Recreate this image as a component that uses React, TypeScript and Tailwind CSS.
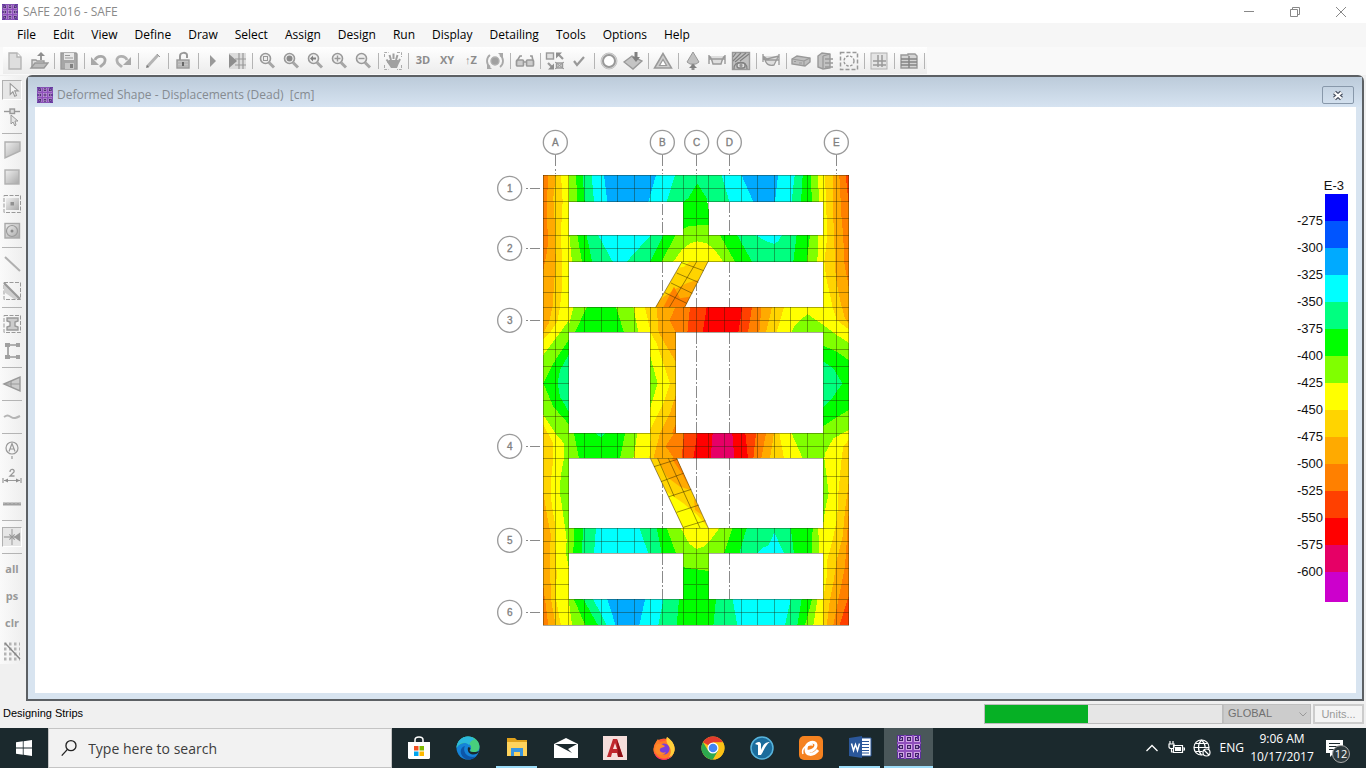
import type { ReactNode } from 'react'

/* ---------- logo ---------- */

function SafeLogo(props: { size: number }) {
  const cells = [1, 9, 17]
  return <svg width={props.size} height={props.size} viewBox="0 0 24 24" aria-hidden="true">
    <rect width="24" height="24" fill="#5c2f9a" />
    <path d="M0 8h24M0 16h24M8 0v24M16 0v24" stroke="#8f4fbc" strokeWidth="2" />
    {cells.map((y) => cells.map((x) => <g key={`${x}-${y}`}>
      <rect x={x + 0.5} y={y + 0.5} width="5" height="5" fill="#3d1f63" stroke="#cfa6e4" strokeWidth="1" />
      <rect x={x + 2.2} y={y + 2.2} width="1.6" height="1.6" fill="#e8cdf5" />
    </g>))}
    <path d="M3 4V0M21 4V0M3 20v4M21 20v4M0 12h2M22 12h2" stroke="#5c2f9a" strokeWidth="2" />
  </svg>
}

/* ---------- toolbar icons, all on a 20x20 grid ---------- */

function Icon(props: { children: ReactNode }) {
  return <svg width="20" height="20" viewBox="0 0 20 20" fill="none" stroke="#999" strokeWidth="1.4" aria-hidden="true">{props.children}</svg>
}

function Magnifier(props: { children?: ReactNode }) {
  return <Icon>
    <circle cx="8.500" cy="7.500" r="5" fill="#eee" strokeWidth="1.600" />
    <path d="M12 11.500L17 16.500" strokeWidth="3" stroke="#a6a6a6" />
    {props.children}
  </Icon>
}

const topIcons: Record<string, ReactNode> = {
  New: <Icon><path d="M4 2h8l4 4v12H4z" fill="#dedede" stroke="#b4b4b4" /><path d="M12 2v4h4" fill="#fff" stroke="#b4b4b4" /></Icon>,
  Open: <Icon><path d="M3 17V9h4l1 1h7v2" fill="#ddd" /><path d="M2 17l4-5h13l-4 5z" fill="#bbb" /><path d="M12 9V4" strokeWidth="2" /><path d="M8 5l4-4 4 4z" fill="#8e8e8e" stroke="none" /></Icon>,
  Save: <Icon><path d="M2 2h15l1 1v15H2z" fill="#a6a6a6" stroke="#9a9a9a" /><path d="M5 2h10v7H5z" fill="#e8e8e8" stroke="none" /><path d="M6 4.500h5M6 7h8" strokeWidth="1" /><path d="M6 12h9v6H6z" fill="#c8c8c8" stroke="none" /><path d="M11 13h3v4h-3z" fill="#808080" stroke="none" /></Icon>,
  Undo: <Icon><path d="M6 9C8 4 17 4 16 10c0 3-3 4-5 6" strokeWidth="2.800" stroke="#a8a8a8" /><path d="M2 6v8h8z" fill="#a8a8a8" stroke="none" /></Icon>,
  Redo: <Icon><path d="M14 9C12 4 3 4 4 10c0 3 3 4 5 6" strokeWidth="2.800" stroke="#b0b0b0" /><path d="M18 6v8h-8z" fill="#a8a8a8" stroke="none" /></Icon>,
  Edit: <Icon><path d="M4 16L15 4" strokeWidth="3" stroke="#b4b4b4" /><path d="M14 3l3 3" strokeWidth="1" /><path d="M3 17l1-3 2 2z" fill="#777" stroke="none" /></Icon>,
  Unlock: <Icon><path d="M7 9V5c0-4 7-4 7-1v3" strokeWidth="2" /><rect x="4" y="9" width="12" height="8" fill="#c4c4c4" /><path d="M4 12h12M4 15h12" stroke="#aaa" strokeWidth="1" /><path d="M10 11v4" stroke="#666" strokeWidth="2" /></Icon>,
  Run: <Icon><path d="M7 4l6 6-6 6z" fill="#999" stroke="none" /></Icon>,
  'Run detailing': <Icon><path d="M2 2h17v16H2z" fill="#dcdcdc" stroke="none" /><path d="M12 2v16M16 2v16M8 8h11M8 14h11" strokeWidth="1.200" /><path d="M2 3l8 7-8 7z" fill="#8e8e8e" stroke="none" /></Icon>,
  'Zoom window': <Magnifier><rect x="6.500" y="5.500" width="4" height="4" strokeWidth="1" /></Magnifier>,
  'Zoom full': <Magnifier><circle cx="8.500" cy="7.500" r="3" fill="#8a8a8a" stroke="none" /></Magnifier>,
  'Zoom previous': <Magnifier><path d="M5 7.500l3-3v2h3v2H8v2z" fill="#808080" stroke="none" /></Magnifier>,
  'Zoom in': <Magnifier><path d="M5.500 7.500h6M8.500 4.500v6" /></Magnifier>,
  'Zoom out': <Magnifier><path d="M5.500 7.500h6" /></Magnifier>,
  Pan: <Icon><path d="M1.500 6V1.500h4M14 1.500h4.500V6M1.500 14v4.500h4M18.500 14v4.500H14" stroke="#aaa" strokeWidth="1" strokeDasharray="3 1" /><path d="M6 12L3.500 8.500M8 9L6.500 4M10.500 8V2.500M13 9l1.500-5M15 12l2-4" strokeWidth="2" stroke="#a0a0a0" /><path d="M6 9h9l1 3-2 5H8l-4-6z" fill="#a0a0a0" stroke="none" /></Icon>,
  Rotate: <Icon><circle cx="10" cy="10" r="4" fill="#a0a0a0" stroke="#b0b0b0" /><path d="M5 4C1 7 1 13 5 16M15 4c4 3 4 9 0 12" strokeWidth="1.800" stroke="#a8a8a8" /><path d="M2 13v5h5zM18 7V2h-5z" fill="#a8a8a8" stroke="none" /></Icon>,
  'Object shrink': <Icon><rect x="1.500" y="9" width="7" height="6" rx="1" fill="#ccc" strokeWidth="1.700" /><rect x="11.500" y="9" width="7" height="6" rx="1" fill="#ccc" strokeWidth="1.700" /><path d="M8 11h4M2 10l3-5h2M18 10l-1-5h-2" strokeWidth="1.600" /></Icon>,
  'Display options': <Icon><rect x="1.500" y="2" width="7" height="6" fill="#e0e0e0" /><rect x="11.500" y="12" width="6" height="5" fill="#d0d0d0" /><path d="M10 11l9 7M10 18l9-7" strokeWidth="1" /><path d="M18 8l-5-5M3 12l4 4" strokeWidth="2.200" /><path d="M11 1.500h6l-6 6zM9 18.500H3l6-6z" fill="#8e8e8e" stroke="none" /></Icon>,
  'Check model': <Icon><path d="M5 10l3 4 7-8" strokeWidth="2.200" /></Icon>,
  'Assign joint': <Icon><circle cx="10" cy="10" r="8" strokeWidth="1" stroke="#c4c4c4" fill="#ddd" /><circle cx="10" cy="10" r="6" strokeWidth="2" fill="#fff" /></Icon>,
  'Show load': <Icon><path d="M1 11l8-6 10 5-9 8z" fill="#c4c4c4" /><path d="M13 1v6" strokeWidth="3" stroke="#808080" /><path d="M9 6h8l-4 5z" fill="#808080" stroke="none" /></Icon>,
  'Deformed shape': <Icon><path d="M10 2.500L1.500 17h17z" fill="#ccc" strokeWidth="1.500" /><path d="M10 8.500l-3.500 6h7z" fill="#fff" strokeWidth="1.200" /></Icon>,
  Reactions: <Icon><path d="M10 1L4 11l3 2h6l3-2z" fill="#c0c0c0" strokeWidth="1" /><path d="M10 13v6" strokeWidth="3" stroke="#909090" /><path d="M6 17l4-4 4 4z" fill="#808080" stroke="none" /></Icon>,
  'Beam forces': <Icon><path d="M2 4v9M18 4v9M2 8h16M2 5c2 1 3 4 4 8h8c1-4 2-7 4-8" fill="#dedede" strokeWidth="1.400" /></Icon>,
  'Slab forces': <Icon><rect x="1.500" y="1.500" width="17" height="17" fill="#c0c0c0" /><path d="M2 6l3-4M2 10l8-8M4 11l11-9M9 10l9-7M3 18c-1-9 14-9 13 0" strokeWidth="1.200" stroke="#808080" /><rect x="6" y="12" width="8" height="5" rx="2" fill="#ddd" stroke="#808080" /><circle cx="10" cy="14.500" r="1" fill="#666" /></Icon>,
  'Strip forces': <Icon><path d="M2 3v8M18 3v11M2 5l4 3 12-3M2 8l5 1h11M3 6c2 8 5 9 10 8l4-8" fill="#ddd" strokeWidth="1.300" /></Icon>,
  'Beam design': <Icon><path d="M1 8l5-3 13 2v4l-5 4L1 13z" fill="#bebebe" /><path d="M1 8l12 2 6-3M13 10v5M3 10.500h2M8 12h3" strokeWidth="1.200" /></Icon>,
  'Slab design': <Icon><path d="M3 5l4-3 8 1v14l-7 1-5-2z" fill="#c2c2c2" /><path d="M8 5v12M8 5l7-2M10 8h8M10 12h8M10 16h8" strokeWidth="1.300" /></Icon>,
  Punching: <Icon><rect x="1.500" y="1.500" width="17" height="17" strokeDasharray="4 2" strokeWidth="1.500" /><circle cx="10" cy="10" r="5" strokeDasharray="2.500 1.500" /></Icon>,
  'Detailing grid': <Icon><rect x="2" y="2" width="16" height="16" fill="#e4e4e4" stroke="#b0b0b0" strokeWidth="1" /><path d="M9 4v12M13 4v12M4 10h13M4 14h13" strokeWidth="1.500" /></Icon>,
  Tables: <Icon><path d="M2 4h7V3h7l2 2v12H2z" fill="#d4d4d4" /><path d="M2 8h16M2 11h16M2 14h16M10 5v12" strokeWidth="1.400" stroke="#848484" /></Icon>,
}

const topGroups = [
  ['New', 'Open'], ['Save'], ['Undo', 'Redo'], ['Edit'], ['Unlock'], ['Run', 'Run detailing'],
  ['Zoom window', 'Zoom full', 'Zoom previous', 'Zoom in', 'Zoom out'], ['Pan'],
  ['3D', 'XY', '↑Z', 'Rotate'], ['Object shrink'], ['Display options', 'Check model'],
  ['Assign joint', 'Show load'], ['Deformed shape'], ['Reactions', 'Beam forces', 'Slab forces'],
  ['Strip forces'], ['Beam design', 'Slab design', 'Punching'], ['Detailing grid'], ['Tables'],
]

const sideIcons: Record<string, ReactNode> = {
  Select: <Icon><path d="M8 3v12l3-3 2 5 2-1-2-5h4z" fill="#f4f4f4" stroke="#999" strokeWidth="1.200" /></Icon>,
  Reshape: <Icon><path d="M2 4.500h16" /><rect x="8" y="2" width="4.500" height="4.500" fill="#ddd" /><path d="M9 8v9l2-2 2 4 1-1-1-4h3z" fill="#e4e4e4" strokeWidth="1" /></Icon>,
  'Draw slab': <Icon><path d="M3 2h15v9L3 18z" fill="url(#metal)" stroke="#b0b0b0" /></Icon>,
  'Draw rectangle': <Icon><rect x="3" y="3" width="14" height="14" fill="url(#metal)" stroke="#b0b0b0" /></Icon>,
  'Quick slab': <Icon><rect x="2" y="1.500" width="16.500" height="17" strokeDasharray="4 1.500" strokeWidth="1" /><rect x="4" y="4" width="13" height="12" fill="url(#metal)" stroke="none" /><rect x="8.500" y="8" width="3.500" height="3.500" fill="#909090" stroke="none" /></Icon>,
  'Draw around': <Icon><rect x="3" y="2.500" width="14.500" height="14.500" fill="url(#metal)" stroke="#a8a8a8" /><circle cx="10" cy="10" r="5.500" strokeWidth="1.200" /><circle cx="10" cy="10" r="1.500" fill="#888" stroke="none" /></Icon>,
  'Draw line': <Icon><path d="M3 3l15 14" stroke="#b0b0b0" strokeWidth="2" /></Icon>,
  'Quick line': <Icon><rect x="2" y="1.500" width="16.500" height="17" strokeDasharray="4 1.500" strokeWidth="1" /><path d="M2 2v9l10 7h6z" fill="#d0d0d0" stroke="none" /><path d="M2 2l16 16" strokeWidth="2.200" /></Icon>,
  'Draw column': <Icon><rect x="2" y="1.500" width="16.500" height="17" strokeDasharray="4 1.500" strokeWidth="1" /><path d="M5 4h11v3l-3 1v4l3 1v3H5v-3l3-1V8L5 7z" fill="#ccc" /></Icon>,
  'Draw wall': <Icon><path d="M16 4H6v12h10" strokeWidth="1.600" /><path d="M3 2h5v4H3zM14 2h4v4h-4zM3 14h5v4H3zM14 14h4v4h-4z" fill="#a0a0a0" stroke="none" /></Icon>,
  'Draw strip': <Icon><path d="M2 10l16-7v14z" fill="#ccc" /><path d="M2 10h16M9 7v6" strokeWidth="1.200" /></Icon>,
  'Draw tendon': <Icon><path d="M2 10c3-2 4-2 7 0s5 1 9-1" stroke="#b4b4b4" strokeWidth="2" /></Icon>,
  'Grid bubble': <Icon><circle cx="10" cy="8" r="6" strokeWidth="1.200" /><path d="M7 11.500l3-8 3 8M8 9h4M10 16v3" strokeWidth="1.200" /></Icon>,
  Dimension: <Icon><path d="M1 11v5M19 11v5M2 13.500h16" strokeWidth="1.200" /><path d="M2 13.500l4-2v4zM18 13.500l-4-2v4z" fill="#8e8e8e" stroke="none" /><path d="M8 5c0-4 5-3 4 0L8 9h4.500" strokeWidth="1.300" /></Icon>,
  'Reference line': <Icon><path d="M1 10h18" stroke="#a0a0a0" strokeWidth="3" /><path d="M1 9h18" stroke="#c0c0c0" strokeWidth="1" strokeDasharray="2 2" /></Icon>,
  Snap: <Icon><path d="M10 1v18M1 10h18" stroke="#aaa" /><path d="M7 7l6 6M7 13l6-6" strokeWidth="1.200" /><path d="M12 10l7-5v10z" fill="#999" stroke="none" /></Icon>,
  'Clear snap': <Icon><path d="M2 3h16M2 8h16M2 13h16M2 18h16" strokeWidth="3" strokeDasharray="2.500 2.500" stroke="#b4b4b4" /><path d="M3 2l15 16" stroke="#888" /></Icon>,
}

const sideGroups = [
  ['Select', 'Reshape'], ['Draw slab', 'Draw rectangle', 'Quick slab', 'Draw around'], ['Draw line', 'Quick line'],
  ['Draw column', 'Draw wall'], ['Draw strip'], ['Draw tendon'], ['Grid bubble', 'Dimension', 'Reference line'],
  ['Snap'], ['all', 'ps', 'clr', 'Clear snap'],
]

/* ---------- plan drawing ---------- */

const BLUE = '#00aaff'
const CYAN = '#00ffff'
const TEAL = '#00ff80'
const GREEN = '#00ff00'
const LIME = '#80ff00'
const YELLOW = '#ffff00'
const GOLD = '#ffd400'
const ORANGE = '#ffaa00'
const DARK = '#ff8000'
const EMBER = '#ff4000'
const RED = '#ff0000'
const CRIMSON = '#e60066'

// model units are a third of a pixel
type Band = [color: string, top: number, bottom: number]

const strips: { y: number, h: number, bands: Band[] }[] = [
  { y: 166, h: 79, bands: [[LIME, 258, 262], [GREEN, 278, 284], [TEAL, 305, 312], [CYAN, 342, 352], [BLUE, 498, 475], [CYAN, 555, 530], [TEAL, 695, 718], [CYAN, 755, 790], [BLUE, 864, 855], [CYAN, 914, 905], [TEAL, 938, 933], [GREEN, 962, 966], [LIME, 984, 987], [YELLOW, 1076, 1076]] },
  { y: 346, h: 79, bands: [[YELLOW, 238, 246], [LIME, 262, 276], [GREEN, 290, 306], [TEAL, 325, 368], [CYAN, 482, 410], [TEAL, 520, 480], [GREEN, 556, 515], [LIME, 690, 735], [GREEN, 742, 786], [TEAL, 920, 910], [GREEN, 960, 950], [LIME, 985, 982], [YELLOW, 1076, 1076]] },
  { y: 562, h: 75, bands: [[YELLOW, 250, 232], [LIME, 290, 255], [GREEN, 378, 402], [LIME, 430, 445], [YELLOW, 465, 482], [GOLD, 500, 506], [ORANGE, 556, 556], [DARK, 600, 592], [EMBER, 650, 638], [RED, 757, 745], [EMBER, 786, 774], [DARK, 814, 808], [ORANGE, 846, 828], [GOLD, 882, 860], [YELLOW, 1076, 1076]] },
  { y: 940, h: 75, bands: [[LIME, 252, 267], [GREEN, 405, 390], [LIME, 442, 430], [YELLOW, 483, 478], [GOLD, 510, 490], [ORANGE, 552, 552], [DARK, 582, 575], [EMBER, 622, 610], [RED, 668, 662], [CRIMSON, 727, 733], [RED, 766, 774], [EMBER, 798, 790], [DARK, 828, 814], [ORANGE, 852, 840], [GOLD, 868, 882], [YELLOW, 905, 938], [LIME, 1076, 1076]] },
  { y: 1224, h: 76, bands: [[LIME, 252, 250], [GREEN, 280, 275], [TEAL, 318, 312], [CYAN, 448, 475], [TEAL, 500, 515], [GREEN, 530, 558], [LIME, 728, 702], [GREEN, 770, 748], [TEAL, 902, 912], [GREEN, 968, 965], [LIME, 985, 987], [YELLOW, 1076, 1076]] },
  { y: 1438, h: 78, bands: [[YELLOW, 236, 246], [LIME, 252, 286], [GREEN, 280, 324], [TEAL, 310, 350], [CYAN, 352, 377], [BLUE, 465, 448], [CYAN, 520, 505], [TEAL, 567, 560], [GREEN, 678, 670], [TEAL, 728, 742], [CYAN, 902, 885], [TEAL, 935, 922], [GREEN, 966, 945], [LIME, 982, 970], [YELLOW, 1076, 1076]] },
]

const patches: [color: string, points: string][] = [
  // row details
  [CYAN, '798,346 875,346 864,364 853,372 825,362'],
  [YELLOW, '550,425 575,390 600,370 622,364 650,370 675,390 700,425'],
  [DARK, '557,562 550,575 539,600 557,637'],
  [LIME, '952,582 1000,615 1000,637 904,637 915,615'],
  [TEAL, '318,940 333,953 345,940'],
  [DARK, '552,940 527,979 552,1015'],
  [YELLOW, '572,1224 598,1272 620,1287 645,1278 662,1260 688,1224'],
  [CYAN, '853,1238 882,1300 802,1300 815,1285 835,1276'],
  // axis C
  [GREEN, '622,190 650,235 656,270 656,314 580,326 580,245 594,235'],
  [LIME, '580,326 598,318 656,314 656,346 580,346'],
  [LIME, '580,1300 656,1300 656,1353 580,1342'],
  [GREEN, '580,1342 656,1353 656,1438 580,1438'],
  // axis B
  [ORANGE, '481,637 557,637 557,940 481,940'],
  [GOLD, '481,637 506,637 530,680 557,725 557,825 540,880 510,940 481,940'],
  [YELLOW, '481,637 500,670 540,790 520,850 481,928'],
  [LIME, '481,710 503,790 481,862'],
  [DARK, '557,915 557,940 545,940'],
  // west wall
  [LIME, '160,166 236,166 236,1516 160,1516'],
  [GREEN, '236,660 190,730 160,790 190,860 236,912'],
  [TEAL, '236,705 210,750 203,790 210,830 236,875'],
  [YELLOW, '160,166 236,166 236,602 205,645 160,705'],
  [GOLD, '160,166 213,166 218,245 212,350 217,420 216,500 210,562 202,605 180,638 160,658'],
  [ORANGE, '160,166 197,166 190,235 194,300 197,420 188,560 176,610 160,638'],
  [DARK, '160,166 174,166 170,290 174,350 172,390 160,450'],
  [YELLOW, '160,885 200,945 222,970 222,1015 212,1070 210,1120 222,1200 230,1260 228,1300 236,1340 236,1516 160,1516'],
  [GOLD, '160,915 190,970 190,1015 182,1090 182,1130 196,1220 196,1280 200,1360 198,1438 213,1516 160,1516'],
  [ORANGE, '160,1120 172,1190 182,1240 180,1340 183,1438 197,1516 160,1516'],
  [DARK, '160,1400 170,1477 175,1516 160,1516'],
  // east wall
  [LIME, '1000,166 1076,166 1076,1516 1000,1516'],
  [GREEN, '1000,677 1040,695 1076,720 1076,870 1040,892 1000,918'],
  [TEAL, '1000,725 1030,745 1057,790 1030,830 1000,862'],
  [YELLOW, '1000,166 1076,166 1076,668 1040,645 1000,615'],
  [GOLD, '1005,166 1012,350 1003,425 1008,470 1028,562 1040,600 1076,628 1076,166'],
  [ORANGE, '1028,166 1028,245 1032,346 1037,470 1050,540 1065,595 1076,610 1076,166'],
  [DARK, '1048,166 1055,300 1060,350 1062,425 1076,500 1076,166'],
  [EMBER, '1067,166 1076,250 1076,166'],
  [YELLOW, '1076,930 1030,955 1005,1000 1003,1015 1010,1070 1016,1120 1005,1170 1000,1210 1000,1516 1076,1516'],
  [GOLD, '1076,960 1060,980 1055,1015 1045,1120 1042,1190 1030,1250 1012,1320 1010,1370 1000,1438 1000,1516 1076,1516'],
  [ORANGE, '1076,1090 1065,1170 1058,1250 1040,1320 1030,1390 1020,1438 1010,1516 1076,1516'],
  [DARK, '1076,1180 1065,1340 1045,1438 1030,1516 1076,1516'],
  [EMBER, '1076,1430 1048,1516 1076,1516'],
]

const braces: [color: string, points: string][] = [
  [GOLD, '576,425 654,425 584,562 497,562'],
  [YELLOW, '576,425 598,425 582,440 566,443'],
  [ORANGE, '627,478 584,562 497,562 512,536 560,505 590,490'],
  [DARK, '600,530 584,562 520,562 552,500 570,535'],
  [GOLD, '481,1015 560,1015 655,1224 580,1224'],
  [ORANGE, '502,1015 560,1015 602,1110 570,1100 530,1070'],
  [DARK, '545,1015 560,1015 602,1110 575,1060'],
  [YELLOW, '530,1115 580,1150 622,1185 655,1224 580,1224'],
  [ORANGE, '612,1135 636,1185 615,1170'],
]

const voids = [
  [236, 245, 344, 101], [656, 245, 344, 101], [236, 425, 764, 137],
  [236, 637, 245, 303], [557, 637, 443, 303], [236, 1015, 764, 209],
  [236, 1300, 344, 138], [656, 1300, 344, 138],
]

const wallTicks = [295, 470, 517, 688, 739, 790, 841, 889, 1069, 1120, 1171, 1345, 1393]
const spanTicks = [283, 333, 382, 433, 481, 517, 580, 620, 656, 703, 754, 802, 853, 902, 952]
const columns = [{ name: 'A', at: 196 }, { name: 'B', at: 517 }, { name: 'C', at: 620 }, { name: 'D', at: 718 }, { name: 'E', at: 1039 }]
const rows = [{ name: '1', at: 205 }, { name: '2', at: 385 }, { name: '3', at: 601 }, { name: '4', at: 979 }, { name: '5', at: 1261 }, { name: '6', at: 1477 }]

function Bubble(props: { x: number, y: number, name: string }) {
  return <g>
    <circle cx={props.x} cy={props.y} r="36" fill="#fff" stroke="#9a9a9a" strokeWidth="4" />
    <text x={props.x} y={props.y + 10} textAnchor="middle" fontSize="30" fill="#808080" stroke="#808080" strokeWidth="1" fontFamily="Liberation Sans, Arial, sans-serif">{props.name}</text>
  </g>
}

function Strip(props: { y: number, h: number, bands: Band[] }) {
  const { y, h, bands } = props
  return <>
    {bands.map(([color, top, bottom], i) => {
      const left = i ? bands[i - 1] : [color, 236, 236]
      return <polygon key={i} fill={color} points={`${left[1]},${y} ${top},${y} ${bottom},${y + h} ${left[2]},${y + h}`} />
    })}
  </>
}

function FloorPlan() {
  return <svg width="411" height="586" viewBox="0 -39 1233 1758" role="img" aria-label="Deformed shape contours">
    <g shapeRendering="crispEdges">
      {strips.map((s) => <Strip key={s.y} {...s} />)}
      {patches.map(([color, points], i) => <polygon key={i} fill={color} points={points} />)}
      {voids.map(([x, y, w, h]) => <rect key={`${x}-${y}`} x={x} y={y} width={w} height={h} fill="#fff" />)}
    </g>
    <g stroke="#8a8a8a" strokeWidth="3" strokeDasharray="34 7 6 7" shapeRendering="crispEdges">
      {columns.map((c) => <path key={c.name} d={`M${c.at} 105V163`} />)}
      <path d="M517 252V346M517 425V562M517 1015V1224M517 1300V1438" />
      <path d="M718 245V346M718 425V562M718 637V940M718 1015V1224M718 1300V1438" />
      <path d="M620 425V562M620 637V940M620 1015V1224" />
    </g>
    <g stroke="#8a8a8a" strokeWidth="3" shapeRendering="crispEdges">
      {rows.map((r) => <path key={r.name} d={`M108 ${r.at}h7M120 ${r.at}h30`} />)}
    </g>
    {braces.map(([color, points], i) => <polygon key={i} fill={color} points={points} />)}
    <g stroke="#202000" strokeOpacity="0.38" strokeWidth="3" fill="none" shapeRendering="crispEdges">
      {strips.map((s) => <g key={s.y}>
        <path d={`M160 ${s.y}H1076M160 ${s.y + 39}H1076M160 ${s.y + s.h}H1076`} />
        {spanTicks.map((x) => <path key={x} d={`M${x} ${s.y}v${s.h}`} />)}
      </g>)}
      {[160, 196, 236, 1000, 1040, 1076].map((x) => <path key={x} d={`M${x} 166V1516`} />)}
      {wallTicks.map((y) => <path key={y} d={`M160 ${y}H236M1000 ${y}H1076`} />)}
      {[688, 739, 790, 841, 889].map((y) => <path key={y} d={`M481 ${y}H557`} />)}
      <path d="M481 637V940M517 637V940M557 637V940" />
      <path d="M580 245V346M620 245V346M656 245V346M580 295H656" />
      <path d="M580 1300V1438M620 1300V1438M656 1300V1438M580 1345H656M580 1393H656" />
    </g>
    <g stroke="#3a2a00" strokeOpacity="0.5" strokeWidth="3" fill="none">
      <path d="M576 425L497 562M654 425L584 562M620 425L538 562" />
      <path d="M575 428L641 452M560 459L625 487M543 489L607 520M525 518L590 550" />
      <path d="M481 1015L580 1224M560 1015L655 1224M503 1015L553 1130M535 1015L630 1224" />
      <path d="M492 1040L562 1018M513 1085L580 1060M537 1130L604 1108M560 1177L627 1155M580 1222L646 1202" />
    </g>
    {columns.map((c) => <Bubble key={c.name} x={c.at} y={67} name={c.name} />)}
    {rows.map((r) => <Bubble key={r.name} x={59} y={r.at} name={r.name} />)}
  </svg>
}

const legend = [
  { color: 'bg-[#0000ff]', label: '-275' }, { color: 'bg-[#0055ff]', label: '-300' }, { color: 'bg-[#00aaff]', label: '-325' },
  { color: 'bg-[#00ffff]', label: '-350' }, { color: 'bg-[#00ff80]', label: '-375' }, { color: 'bg-[#00ff00]', label: '-400' },
  { color: 'bg-[#80ff00]', label: '-425' }, { color: 'bg-[#ffff00]', label: '-450' }, { color: 'bg-[#ffd400]', label: '-475' },
  { color: 'bg-[#ffaa00]', label: '-500' }, { color: 'bg-[#ff8000]', label: '-525' }, { color: 'bg-[#ff4000]', label: '-550' },
  { color: 'bg-[#ff0000]', label: '-575' }, { color: 'bg-[#e60066]', label: '-600' }, { color: 'bg-[#cc00cc]', label: '' },
]

function Legend() {
  return <div className="flex flex-col items-end justify-self-end pt-[70px] pr-2 font-['Liberation_Sans',Arial,sans-serif] text-[13px] leading-[17px] text-[#111]">
    <div className="pr-1">E-3</div>
    {legend.map((l) => <div key={l.color} className="flex h-[27px] items-end gap-[2px] last:h-[30px]">
      <span className="translate-y-2">{l.label}</span>
      <span className={`h-full w-[23px] ${l.color}`}></span>
    </div>)}
  </div>
}

/* ---------- window chrome ---------- */

const menus = ['File', 'Edit', 'View', 'Define', 'Draw', 'Select', 'Assign', 'Design', 'Run', 'Display', 'Detailing', 'Tools', 'Options', 'Help']

function TitleBar() {
  return <header className="flex h-[23px] items-center bg-white pr-[2px] pl-[2px]">
    <SafeLogo size={16} />
    <h1 className="grow pl-[5px] text-[12px] text-[#8a8a8a]">SAFE 2016 - SAFE</h1>
    <button aria-label="Minimize" className="flex h-full w-[46px] items-center justify-center">
      <svg width="10" height="10" stroke="#888"><path d="M0 4.500h10" /></svg>
    </button>
    <button aria-label="Restore" className="flex h-full w-[46px] items-center justify-center">
      <svg width="10" height="10" stroke="#888" fill="none"><path d="M.5 2.500h7v7h-7zM2.500 2.500v-2h7v7h-2" /></svg>
    </button>
    <button aria-label="Close" className="flex h-full w-[46px] items-center justify-center">
      <svg width="10" height="10" stroke="#888"><path d="M0 0l10 10M10 0L0 10" /></svg>
    </button>
  </header>
}

function TopToolbar() {
  return <div className="flex bg-[#f9f9f9] pb-px pl-[3px]">
    <div className="flex h-[27px] items-center bg-gradient-to-b from-white to-[#ececec]">
      {topGroups.map((group) => <div key={group[0]} className="flex items-center">
        {group.map((name) => <button key={name} title={name} className="flex h-6 w-6 items-center justify-center text-[11px] font-bold text-[#8c8c8c]">
          {topIcons[name] ?? name}
        </button>)}
        <span className="mr-[2px] ml-[3px] h-4 w-px bg-[#b4b4b4]"></span>
      </div>)}
    </div>
  </div>
}

function SideToolbar() {
  return <div className="flex w-[26px] shrink-0 flex-col items-start bg-[#f0f0f0] pt-px">
    <div className="flex w-6 flex-col items-center bg-gradient-to-r from-[#fafafa] to-[#eeeeee]">
      {sideGroups.map((group, i) => <div key={group[0]} className="flex w-full flex-col items-center">
        {i > 0 && <span className="mt-[3px] mb-[2px] h-px w-5 bg-[#b4b4b4]"></span>}
        {group.map((name) => <div key={name} className="flex h-[27px] items-center">
          <button title={name} className={name === 'Select' || name === 'Snap'
            ? 'flex h-5 w-5 items-center justify-center border border-[#b0b0b0] border-r-white border-b-white bg-[#e6e6e6]'
            : 'flex h-5 w-5 items-center justify-center text-[11px] font-bold text-[#999999]'}>
            {sideIcons[name] ?? name}
          </button>
        </div>)}
      </div>)}
    </div>
  </div>
}

function PlanWindow() {
  return <section className="mr-[2px] flex min-w-0 grow flex-col rounded-t-md border-2 border-[#5c6064] bg-[#d8e4f0]">
    <div className="flex h-[30px] shrink-0 items-center bg-gradient-to-b from-[#bccbda] to-[#d6e3f1] pt-[6px] pr-[8px] pl-[9px]">
      <SafeLogo size={16} />
      <h2 className="grow pl-1 text-[12px] whitespace-pre text-[#858b91]">Deformed Shape - Displacements (Dead)  [cm]</h2>
      <button aria-label="Close plan" className="flex h-[18px] w-8 items-center justify-center rounded-xs border border-[#8898aa]">
        <svg width="14" height="11" viewBox="0 0 14 11"><path d="M3.500 2.500l7 6M10.500 2.500l-7 6" stroke="#4c5464" strokeWidth="4.500" /><path d="M3.500 2.500l7 6M10.500 2.500l-7 6" stroke="#fff" strokeWidth="2.200" /></svg>
      </button>
    </div>
    <div className="mr-[6px] mb-[6px] ml-[7px] grid grow grid-cols-[1fr_auto_1fr] bg-white">
      <div></div>
      <FloorPlan />
      <Legend />
    </div>
  </section>
}

function StatusBar() {
  const progress = 43.5
  return <footer className="flex h-[27px] shrink-0 items-center bg-[#f0f0f0] pr-[2px] pb-[2px] font-['Liberation_Sans',Arial,sans-serif] text-[11px]">
    <span className="grow pl-[3px] text-black">Designing Strips</span>
    <div role="progressbar" aria-label="Designing strips" className="h-5 w-[239px] border border-[#bcbcbc] bg-[#e6e6e6]">
      <div className="h-full bg-[#06b025]" style={{ width: `${progress}%` }}></div>
    </div>
    <div className="relative mr-[2px]">
      <select aria-label="Coordinate system" disabled className="block h-5 w-[88px] appearance-none border border-[#bfbfbf] bg-[#cccccc] pl-1 text-[11px] text-[#707070] opacity-100">
        <option>GLOBAL</option>
      </select>
      <svg className="pointer-events-none absolute top-2 right-1" width="8" height="5" fill="none" stroke="#999"><path d="M.5 .5L4 4 7.500 .5" /></svg>
    </div>
    <button className="h-5 w-[51px] border-2 border-[#cccccc] bg-[#f4f4f4] text-[11px] text-[#9a9a9a]">Units...</button>
  </footer>
}

/* ---------- taskbar ---------- */

const apps: { name: string, open?: boolean, active?: boolean, icon: ReactNode }[] = [
  { name: 'Microsoft Store', icon: <svg width="24" height="24" viewBox="0 0 24 24"><path d="M8 7V4c0-4 8-4 8 0v3" fill="none" stroke="#fff" strokeWidth="1.500" /><path d="M1 6h22v16l-1 1H2l-1-1z" fill="#fff" /><path d="M7 10h4.500v4.500H7z" fill="#f25022" /><path d="M12.500 10H17v4.500h-4.500z" fill="#7fba00" /><path d="M7 15.500h4.500V20H7z" fill="#00a4ef" /><path d="M12.500 15.500H17V20h-4.500z" fill="#ffb900" /></svg> },
  { name: 'Edge', icon: <svg width="24" height="24" viewBox="0 0 24 24"><circle cx="12" cy="12" r="11.500" fill="#1583d8" /><path d="M.5 12C1 5 6 .5 12 .5c7 0 11.500 5 11.500 10 0 4-3 6-6 6s-4-1-3-2.500c2-4-1-7-5-7-4 0-8 2-9 5z" fill="#48cf7c" /><path d="M.5 12C1 5 6 .5 12 .5c3 0 5 1 7 3C14 4 14 8 13 9 9 5 3 7 .5 12z" fill="#2bb8dc" /><path d="M9 10c-3 5 2 13 11 10.500-3 3-8 4-12 1.500-5-4-4-11 1-12z" fill="#0d56a8" /><path d="M12 11.500c-1 3 1 7 5 7 3 0 5-1 6-3 0-1-3 1-6 .5-3 0-4-1-3-2.500 1-1 0-3-2-2z" fill="#1b292d" /></svg> },
  { name: 'File Explorer', open: true, icon: <svg width="24" height="24" viewBox="0 0 24 24"><path d="M2 3h8l2 2h10v4H2z" fill="#e0a21c" /><path d="M2 7h20v14H2z" fill="#ffd35c" /><path d="M6 13h12v8h-3v-4H9v4H6z" fill="#3a97e0" /></svg> },
  { name: 'Mail', icon: <svg width="26" height="22" viewBox="0 0 26 22"><path d="M1 7L13 1l12 6v14H1z" fill="#fff" /><path d="M2 7h22l-9 5 4 4z" fill="#1b292d" /></svg> },
  { name: 'AutoCAD', icon: <svg width="24" height="24" viewBox="0 0 24 24"><rect width="24" height="24" fill="#f6dedb" /><path d="M4 21L10 3h4l6 18h-5l-1-4h-5l-1 4z" fill="#c1272d" /><path d="M10 13l2-6 2 6z" fill="#f6dedb" /><path d="M14 3l6 18h-5z" fill="#8f1016" /></svg> },
  { name: 'Firefox', icon: <svg width="24" height="24" viewBox="0 0 24 24"><circle cx="12" cy="13" r="10.500" fill="#ff5a36" /><path d="M3 8c1-2 2-4 3-5l2 3c2-1 4-1 5-1l2-4c5 4 8 8 7.500 13-1 6-5 9.500-10 9.500C6 23 1 19 1.500 13z" fill="#ff7a26" /><path d="M15 1c6 4 8.500 9 7.500 14-1 4-4 7-7 8 4-4 4-9 2-12s-4-5-2.500-10z" fill="#ffd03a" /><circle cx="12" cy="13" r="5.500" fill="#7a3ddb" /><path d="M4 9c4-3 7 0 9 1-1 2-4 1-5 3s2 5 6 3c-3 5-11 3-11-3z" fill="#ff8a2a" /><path d="M2 15c2 7 11 11 18 4-4 8-17 6-18-4z" fill="#ff2d62" /></svg> },
  { name: 'Chrome', icon: <svg width="24" height="24" viewBox="0 0 24 24"><circle cx="12" cy="12" r="11.500" fill="#fbc116" /><path d="M12 12L2 6.200A11.500 11.500 0 0 1 22 6.200L12 6.500z" fill="#e33b2e" /><path d="M2 6.200A11.500 11.500 0 0 0 12 23.500l5-8.500L7 14.500z" fill="#2da94f" /><path d="M12 6.500h10.100a11.500 11.500 0 0 1-10 17l5-8.700z" fill="#fbc116" /><circle cx="12" cy="12" r="5.500" fill="#fff" /><circle cx="12" cy="12" r="4.300" fill="#4285f4" /></svg> },
  { name: 'V', icon: <svg width="24" height="24" viewBox="0 0 24 24"><circle cx="12" cy="12" r="11" fill="#1b6c9c" stroke="#58b4dc" strokeWidth="1.500" /><path d="M5 8c2-2 5-3 6 0l0 6c2-5 4-8 9-8-3 1-6 8-9 13H8L8 9z" fill="#fff" /></svg> },
  { name: 'Browser', icon: <svg width="24" height="24" viewBox="0 0 24 24"><rect width="24" height="24" rx="5" fill="#f58220" /><path d="M8 15c4 1 9-2 9-6 0-5-10-3-10 4 0 7 7 7 12 1" fill="none" stroke="#fff" strokeWidth="3" /><path d="M4 18c-2-6 4-10 10-9" stroke="#fff" strokeWidth="1.500" fill="none" /></svg> },
  { name: 'Word', open: true, icon: <svg width="24" height="24" viewBox="0 0 24 24"><path d="M12 3h11v18H12z" fill="#fff" stroke="#2b579a" /><path d="M14 6.500h7M14 9.500h7M14 12.500h7M14 15.500h7M14 18h7" stroke="#2b579a" /><path d="M1 3l13-2v22L1 21z" fill="#2b579a" /><path d="M3.500 8.500l2 7 2-6 2 6 2-7" fill="none" stroke="#fff" strokeWidth="1.500" /></svg> },
  { name: 'SAFE', open: true, active: true, icon: <SafeLogo size={24} /> },
]

function Taskbar() {
  return <nav className="flex h-10 shrink-0 bg-[#1b292d] text-white">
    <button aria-label="Start" className="flex w-12 items-center justify-center">
      <svg width="16" height="16" viewBox="0 0 16 16" fill="#fff"><path d="M0 2.300L6.800 1.300V7.600H0zM7.600 1.200L16 0v7.600H7.600zM0 8.400h6.800v6.300L0 13.700zM7.600 8.400H16V16l-8.400-1.200z" /></svg>
    </button>
    <label className="flex w-[344px] items-center border border-[#c4c4c4] bg-[#f2f2f2] pl-3">
      <svg width="17" height="18" viewBox="0 0 17 18" fill="none" stroke="#222" strokeWidth="1.400"><circle cx="10.500" cy="6.500" r="5.300" /><path d="M6.800 10.500L.8 17" /></svg>
      <input aria-label="Search" placeholder="Type here to search" className="w-full bg-transparent pl-[11px] text-[14px] outline-none placeholder:text-[#3d3d3d] placeholder:opacity-100" />
    </label>
    <div className="flex grow pl-[2px]">
      {apps.map((a) => <button key={a.name} title={a.name} className={a.active
        ? 'flex w-[49px] items-center justify-center border-b-2 border-[#9cdcf8] bg-[#4a575a]'
        : 'flex w-[49px] items-center justify-center px-1'}>
        {a.open && !a.active
          ? <span className="flex h-full w-full items-center justify-center border-b-2 border-[#9cdcf8]">{a.icon}</span>
          : a.icon}
      </button>)}
    </div>
    <div className="flex items-center text-[12px]">
      <button aria-label="Hidden icons" className="pr-[10px]">
        <svg width="12" height="8" fill="none" stroke="#fff" strokeWidth="1.300"><path d="M.5 7L6 1.500 11.500 7" /></svg>
      </button>
      <svg width="17" height="16" viewBox="0 0 17 16" fill="none" stroke="#fff" strokeWidth="1.200"><path d="M5.500 5.500h9v7h-9zM15 8h1.500v2H15M1 4h5v3c0 2-5 2-5 0zM2 4V1M5 4V1M3.500 8.500v3.500h2" /><path d="M7 7h6v4H7z" fill="#fff" stroke="none" /></svg>
      <svg className="ml-2" width="18" height="18" viewBox="0 0 18 18" fill="none" stroke="#fff" strokeWidth="1.200"><circle cx="8.500" cy="8.500" r="7.500" /><path d="M1 8.500h15M2.500 4.500h12M2.500 12.500h7M8.500 1c-4 4-4 11 0 15M8.500 1c3 3 4 5 3.500 8" /><circle cx="13.500" cy="13.500" r="3.500" fill="#1b292d" /><path d="M11 11l5 5" /></svg>
      <span className="pl-[9px]">ENG</span>
      <div className="w-[73px] pl-[3px] text-center leading-[18px]">
        <div>9:06 AM</div>
        <div>10/17/2017</div>
      </div>
      <button aria-label="Notifications" className="relative mr-3 ml-[9px] h-10 w-7">
        <svg className="absolute top-3 left-0" width="18" height="17" viewBox="0 0 18 17"><path d="M0 0h17v13H8l-4 4v-4H0z" fill="#fff" /><path d="M3 3.500h11M3 6.500h11M3 9.500h7" stroke="#1b292d" /></svg>
        <span className="absolute top-[17px] left-[6px] flex h-[18px] w-[18px] items-center justify-center rounded-full border border-[#aaa] bg-[#2e3a3e] text-[11px]">12</span>
      </button>
    </div>
  </nav>
}

export default function App() {
  return <div className="flex min-h-screen flex-col bg-[#f0f0f0] font-['Open_Sans','Noto_Sans',sans-serif]">
    <svg width="0" height="0" className="absolute" aria-hidden="true">
      <linearGradient id="metal" x1="0" y1="0" x2="1" y2="1"><stop offset="0" stopColor="#f0f0f0" /><stop offset="1" stopColor="#a8a8a8" /></linearGradient>
    </svg>
    <TitleBar />
    <div className="flex h-6 items-center bg-[#f6f6f6] pl-2">
      {menus.map((m) => <button key={m} className="pr-2 pl-[9px] text-[12px] text-black">{m}</button>)}
    </div>
    <TopToolbar />
    <main className="flex grow">
      <SideToolbar />
      <PlanWindow />
    </main>
    <StatusBar />
    <Taskbar />
  </div>
}
